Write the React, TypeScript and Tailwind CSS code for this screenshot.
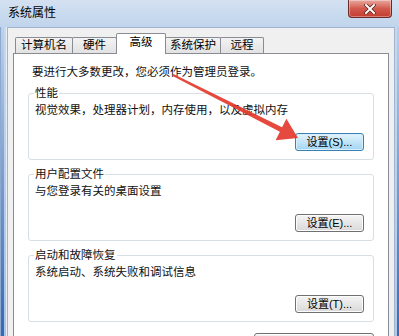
const font = "font-['Liberation_Sans','Noto_Sans_CJK_SC',sans-serif]";

interface SettingsButtonProps {
  label: string;
  hot?: boolean;
}

const SettingsButton = ({ label, hot }: SettingsButtonProps) => (
  <button
    className={
      hot
        ? 'w-[69px] h-[18px] rounded-[3px] border border-[#3c7fb1] bg-linear-to-b from-[#e3f4fc] to-[#9fd5f3] text-[11px] leading-none text-black shadow-[inset_0_0_0_1px_#d8f0fc]'
        : 'w-[69px] h-[18px] rounded-[3px] border border-[#707070] bg-linear-to-b from-[#f4f4f4] to-[#d9d9d9] text-[11px] leading-none text-black shadow-[inset_0_0_0_1px_#fcfcfc]'
    }
  >
    {label}
  </button>
);

interface GroupProps {
  title: string;
  text: string;
  button: string;
  hot?: boolean;
}

const Group = ({ title, text, button, hot }: GroupProps) => (
  <fieldset className="border border-[#d5dfe5] rounded-[3px] pl-[6px] pr-[9px] pb-[8px]">
    <legend className="-ml-px px-px text-[11.5px] leading-[14px] text-[#111]">{title}</legend>
    <p className="mt-[2px] text-[11.5px] leading-[16px] text-[#111]">{text}</p>
    <div className="mt-[15px] flex justify-end">
      <SettingsButton label={button} hot={hot} />
    </div>
  </fieldset>
);

const tabs = [
  { name: '计算机名', w: 'w-[58px]' },
  { name: '硬件', w: 'w-[45px]' },
  { name: '高级', w: 'w-[50px]', active: true },
  { name: '系统保护', w: 'w-[56px]' },
  { name: '远程', w: 'w-[44px]' },
];

export default function App() {
  return (
    <div className={`relative w-[399px] h-[336px] overflow-hidden flex flex-col bg-linear-to-b from-[#c9daee] via-[#b3cbe8] to-[#6f98cf] ${font}`}>
      {/* Barra de título */}
      <div className="h-[27px] flex items-center pl-[8px] pb-[2px] bg-linear-to-b from-[#d3e1f1] to-[#c0d4ec]">
        <span className="text-[12px] text-black">系统属性</span>
      </div>

      {/* Botón cerrar */}
      <div className="absolute top-0 right-[7px] w-[44px] h-[18px] rounded-b-[4px] border border-t-0 border-[#6b2a26] bg-linear-to-b from-[#e8a89f] via-[#d35a4e] to-[#c23b2e] flex items-center justify-center shadow-[inset_0_0_0_1px_rgba(255,255,255,0.35)]">
        <svg width="12" height="10" viewBox="0 0 12 10">
          <path d="M2 1 L10 9 M10 1 L2 9" stroke="#5a1b16" strokeWidth="3.4" strokeLinecap="square" />
          <path d="M2 1 L10 9 M10 1 L2 9" stroke="#ffffff" strokeWidth="2" strokeLinecap="square" />
        </svg>
      </div>

      <div className="flex flex-1 min-h-0">
        {/* Marco izquierdo */}
        <div className="w-[7px] flex">
          <div className="w-px bg-[#8ea9d0]" />
          <div className="w-[3px] bg-linear-to-b from-[#bcd1ec] to-[#3767b2]" />
          <div className="w-[2px] bg-linear-to-b from-[#c8d9ee] to-[#a9c3e6]" />
          <div className="w-px bg-[#e6edf6]" />
        </div>

        {/* Área cliente */}
        <div className="flex-1 bg-[#f0f0f0] border-t border-l border-r border-[#9fb4d0] pt-[5px] px-[5px]">
          {/* Pestañas */}
          <div className="flex items-end h-[20px] pl-[2px]">
            {tabs.map((t) =>
              t.active ? (
                <div
                  key={t.name}
                  className={`${t.w} -ml-px h-[21px] -mb-px relative z-10 bg-white border border-b-0 border-[#898c95] rounded-t-[2px] flex items-center justify-center pb-[2px] text-[11.5px] text-black`}
                >
                  {t.name}
                </div>
              ) : (
                <div
                  key={t.name}
                  className={`${t.w} -ml-px first:ml-0 h-[16px] bg-linear-to-b from-[#f3f3f3] to-[#e2e2e2] border border-b-0 border-[#898c95] rounded-t-[2px] flex items-center justify-center text-[11.5px] text-black`}
                >
                  {t.name}
                </div>
              )
            )}
          </div>

          {/* Panel de la pestaña */}
          <div className="w-[376px] h-[300px] bg-white border border-[#898c95] px-[14px] pt-[10px] flex flex-col">
            <p className="pl-[4px] text-[11.5px] leading-[16px] text-[#111]">
              要进行大多数更改，您必须作为管理员登录。
            </p>
            <div className="mt-[6px] flex flex-col gap-[7px]">
              <Group title="性能" text="视觉效果，处理器计划，内存使用，以及虚拟内存" button="设置(S)..." hot />
              <Group title="用户配置文件" text="与您登录有关的桌面设置" button="设置(E)..." />
              <Group title="启动和故障恢复" text="系统启动、系统失败和调试信息" button="设置(T)..." />
            </div>
            <div className="mt-[11px] flex justify-end">
              <button className="w-[120px] h-[18px] rounded-[3px] border border-[#707070] bg-linear-to-b from-[#f4f4f4] to-[#d9d9d9] shadow-[inset_0_0_0_1px_#fcfcfc] pt-[6px] text-[11px] leading-[12px]">
                环境变量(N)...
              </button>
            </div>
          </div>
        </div>

        {/* Marco derecho */}
        <div className="w-[7px] flex">
          <div className="w-[2px] bg-linear-to-b from-[#c8d9ee] to-[#b3c9e7]" />
          <div className="w-[4px] bg-linear-to-b from-[#b9cfeb] to-[#3a6ab4]" />
          <div className="w-px bg-[#7f9fcf]" />
        </div>
      </div>

      {/* Flecha roja */}
      <svg className="absolute inset-0 pointer-events-none" width="399" height="336">
        <polygon
          points="173.4,74.1 282.1,127.3 286.4,118.8 298,138 275.6,140.2 279.9,131.7 172.6,75.9"
          fill="#e43a2c"
          fillOpacity="0.92"
        />
      </svg>
    </div>
  );
}
